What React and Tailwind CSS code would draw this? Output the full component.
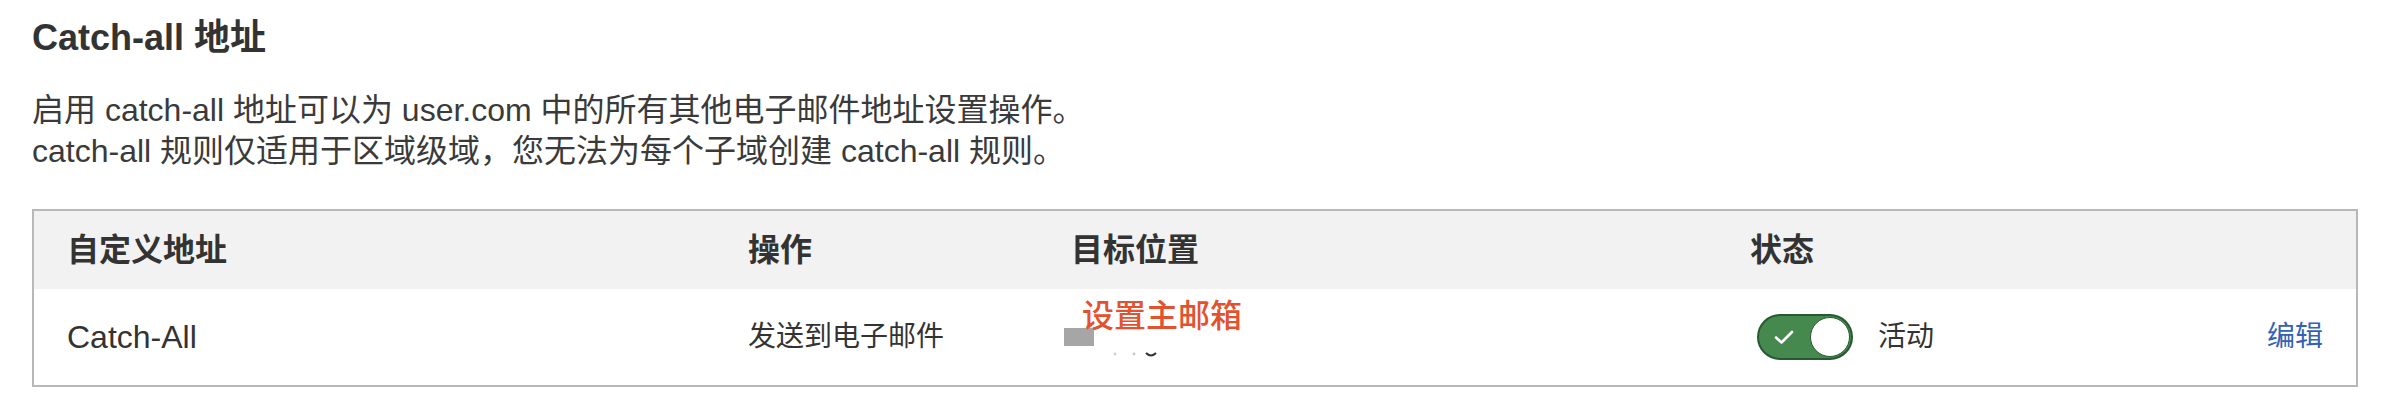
import React from 'react';

const Toggle = () => (
  <div className="flex h-[46px] w-[96px] items-center justify-between rounded-full border-2 border-[#275a30] bg-[#46894f] pl-[14px] pr-[1px]">
    <svg width="22" height="16" viewBox="0 0 22 16" fill="none">
      <path d="M3 8.5 L8.5 13.5 L19 3" stroke="#ffffff" strokeWidth="2.6" strokeLinecap="round" strokeLinejoin="round" />
    </svg>
    <div className="h-[40px] w-[40px] rounded-full border border-[#275a30] bg-white" />
  </div>
);

export default function App() {
  return (
    <div className="h-[410px] w-[2388px] bg-white pl-[32px] font-['Liberation_Sans','Noto_Sans_CJK_SC',sans-serif] text-[#333333]">
      <h2 className="pt-[16px] text-[36px] font-bold leading-[44px]">Catch-all 地址</h2>

      <div className="mt-[30px] text-[32px] leading-[41px] text-[#3a3a3a]">
        <p>启用 catch-all 地址可以为 user.com 中的所有其他电子邮件地址设置操作。</p>
        <p>catch-all 规则仅适用于区域级域，您无法为每个子域创建 catch-all 规则。</p>
      </div>

      <div className="mt-[37px] w-[2326px] border-2 border-[#b8b8b8]">
        <div className="grid h-[78px] grid-cols-[681px_323px_679px_1fr] items-center bg-[#f2f2f2] text-[32px] font-bold">
          <div className="pl-[33px]">自定义地址</div>
          <div className="pl-[33px]">操作</div>
          <div className="pl-[33px]">目标位置</div>
          <div className="pl-[33px]">状态</div>
        </div>

        <div className="grid h-[96px] grid-cols-[681px_323px_679px_1fr] items-center text-[28px] text-[#333333]">
          <div className="pl-[33px] text-[32px]">Catch-All</div>
          <div className="pl-[33px]">发送到电子邮件</div>
          <div className="relative flex h-full items-center pl-[26px]">
            <div className="h-[18px] w-[30px] bg-[#a6a6a6]" />
            <svg className="ml-[19px] mt-[36px]" width="46" height="8" viewBox="0 0 46 8">
              <circle cx="2" cy="3" r="1.4" fill="#d0d0d0" />
              <circle cx="21" cy="3" r="1.4" fill="#c8c8c8" />
              <path d="M33 2 Q38 7 43 2" stroke="#333333" strokeWidth="2" fill="none" />
            </svg>
            <span className="absolute left-[44px] top-[11px] text-[32px] font-medium leading-none text-[#e3522e]">设置主邮箱</span>
          </div>
          <div className="flex items-center justify-between pl-[40px] pr-[33px]">
            <div className="flex items-center gap-[25px]">
              <Toggle />
              <span>活动</span>
            </div>
            <a className="text-[#3262b4]">编辑</a>
          </div>
        </div>
      </div>
    </div>
  );
}
